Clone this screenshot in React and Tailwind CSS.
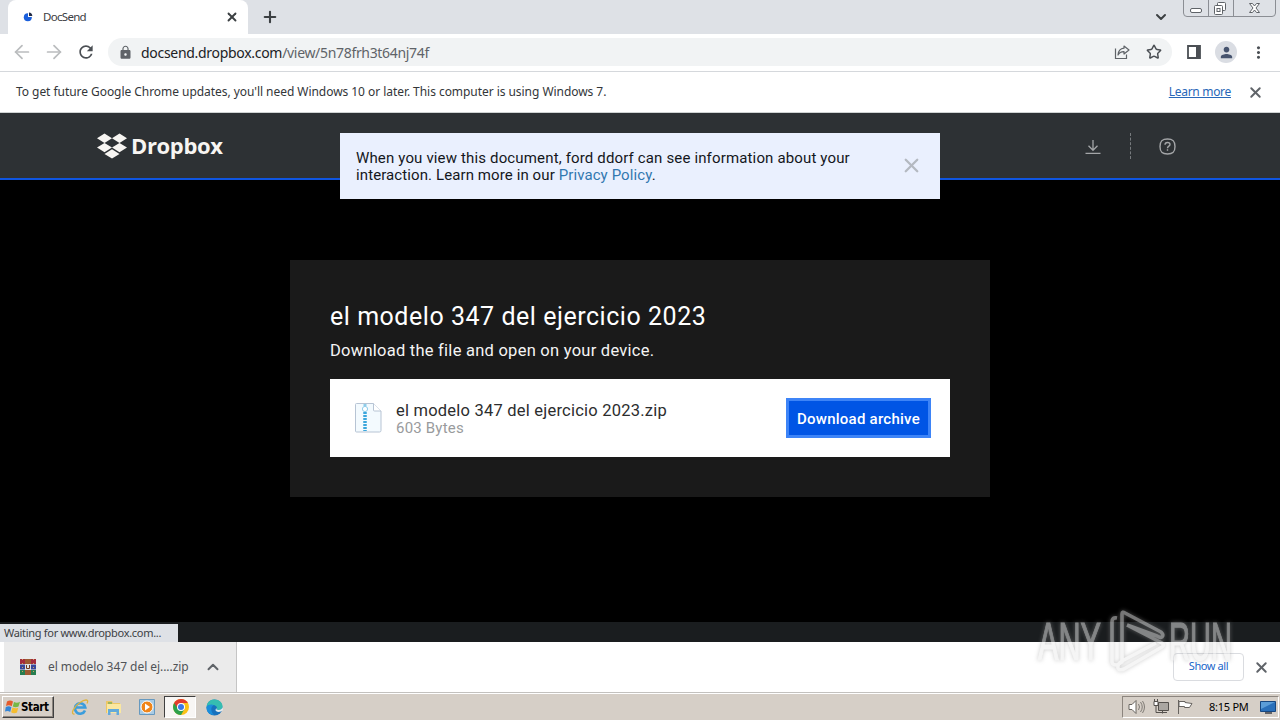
import { ArrowLeft, ArrowRight, ChevronDown, ChevronUp, Plus, Star, X } from 'lucide-react';
import { MdRefresh, MdLock, MdPerson, MdMoreVert } from 'react-icons/md';

function TabStrip() {
  return (
    <div className="relative flex h-[34px] bg-[#dee1e6] pl-2">
      <div className="flex h-[34px] w-60 items-center rounded-t-lg bg-white pl-[15px] pr-[9px] font-['Noto_Sans',sans-serif] text-[#3c4043]">
        <svg className="mr-[10px] h-[10px] w-[10px]" viewBox="0 0 10 10">
          <circle cx="4.8" cy="5.2" r="4" fill="#1a5fdc" />
          <path d="M5 5V1a4 4 0 0 1 4 4Z" fill="#fff" />
          <path d="M6 4V.6A3.7 3.7 0 0 1 9.3 4Z" fill="#222b45" />
        </svg>
        <span className="grow text-[11.5px] tracking-[-0.7px]">DocSend</span>
        <X className="h-[14px] w-[14px]" strokeWidth={3.2} />
      </div>
      <Plus className="ml-[13px] mt-[8px] h-[18px] w-[18px] text-[#3c4043]" strokeWidth={2.8} />
      <ChevronDown className="ml-auto mr-[111px] mt-[9px] h-4 w-4 text-[#3c4043]" strokeWidth={3} />
      {/* Window controls */}
      <svg className="absolute right-[4px] top-0 h-[17px] w-[93px]" viewBox="0 0 93 17" fill="none">
        <path d="M.5 0v13q0 3.500 3.500 3.500h85q3.500 0 3.500-3.500V0M25.500 0v16.500M50.500 0v16.500" stroke="#8b8e94" />
        <rect x="7.500" y="8.500" width="11" height="4" rx="1.500" stroke="#5f6368" fill="#fff" />
        <rect x="34.500" y="2.500" width="8" height="8" rx="1" stroke="#5f6368" fill="#fff" />
        <rect x="31.500" y="5.500" width="8" height="9" rx="1" stroke="#5f6368" fill="#fff" />
        <rect x="34" y="8.500" width="3" height="3" stroke="#5f6368" />
        <path d="M66.500 3.500h3l2 2.500 2-2.500h3l-3.500 4.500 3.500 4.500h-3l-2-2.500-2 2.500h-3l3.500-4.500Z" stroke="#5f6368" fill="#fff" />
      </svg>
    </div>
  );
}

function Toolbar() {
  return (
    <div className="flex h-[38px] items-center border-b border-[#d5d8dc] bg-white pb-px pl-[11px]">
      <ArrowLeft className="h-[22px] w-[22px] shrink-0 text-[#babcbe]" strokeWidth={1.9} />
      <ArrowRight className="ml-[10px] h-[22px] w-[22px] shrink-0 text-[#babcbe]" strokeWidth={1.9} />
      <MdRefresh className="ml-[11px] h-5 w-5 shrink-0 text-[#4b4f54]" />
      <div className="ml-[12px] flex h-7 w-[1064px] shrink-0 items-center rounded-full bg-[#f1f3f4] pl-[10px] pr-[10px]">
        <MdLock className="h-[15px] w-[15px] text-[#5f6368]" />
        <div className="ml-[8px] grow pt-px font-['Noto_Sans',sans-serif] text-[14px] leading-7 text-[#5f6368]">
          <span className="tracking-[-0.3px] text-[#202124]">docsend.dropbox.com</span>
          <span className="tracking-[-0.32px]">/view/5n78frh3t64nj74f</span>
        </div>
        <svg className="h-4 w-4" viewBox="0 0 16 16" fill="none" stroke="#5f6368" strokeWidth="1.200">
          <path d="M1.500 4.500v10h11v-4" />
          <path d="M10 2l5 4-5 4V7.600C7 7.500 5.300 8.600 4 11c.3-4 2.500-6.400 6-6.800Z" strokeLinejoin="round" />
        </svg>
        <Star className="ml-4 h-4 w-4 text-[#4b4f54]" strokeWidth={2.2} />
      </div>
      <svg className="ml-[15px] h-[14px] w-[14px] shrink-0" viewBox="0 0 14 14">
        <path d="M1 1h12v12H1Z" fill="none" stroke="#4b4f54" strokeWidth="1.800" />
        <path d="M9 1h4v12H9Z" fill="#4b4f54" />
      </svg>
      <div className="ml-[14px] flex h-[22px] w-[22px] shrink-0 items-center justify-center rounded-full bg-[#dadde3]">
        <MdPerson className="h-[17px] w-[17px] text-[#46536e]" />
      </div>
      <MdMoreVert className="ml-[12px] h-[19px] w-[19px] shrink-0 text-[#4b4f54]" />
    </div>
  );
}

function InfoBar() {
  return (
    <div className="flex h-[41px] items-center border-b border-[#cfd3d3] bg-white pl-4 pr-[16px] font-['Noto_Sans',sans-serif] text-[12px] text-[#333639]">
      <span className="grow tracking-[-0.05px]">
        To get future Google Chrome updates, you'll need Windows 10 or later. This computer is using Windows 7.
      </span>
      <a className="text-[12px] tracking-[-0.3px] text-[#2867b8] underline">Learn more</a>
      <X className="ml-[16px] h-[17px] w-[17px] text-[#5f6368]" strokeWidth={2.7} />
    </div>
  );
}

function DropboxHeader() {
  return (
    <div className="relative flex h-[67px] items-center border-b-2 border-[#0f55e0] bg-[#2d3134] pl-[97px] pr-[104px]">
      <svg className="mt-px h-[26px] w-[30px]" viewBox="0 0 30 26" fill="#f7f5f2">
        <path d="M7.500.5 0 5.200l7.500 4.700L15 5.200ZM22.500.5 15 5.200l7.500 4.700L30 5.200ZM0 14.600l7.500 4.700 7.500-4.700-7.500-4.700ZM22.500 9.900 15 14.600l7.500 4.700 7.500-4.700ZM7.500 20.900 15 25.600l7.500-4.700-7.500-4.700Z" />
      </svg>
      <span className="mb-px ml-[4px] font-['Open_Sans',sans-serif] text-[22px] font-bold leading-7 tracking-[-0.35px] text-[#f7f5f2]">Dropbox</span>
      <svg className="ml-auto mt-[2px] h-4 w-4" viewBox="0 0 16 16" fill="none" stroke="#a4a6a8" strokeWidth="1.300">
        <path d="M8 1v10M3.500 6.800 8 11.300l4.500-4.500M.5 14.300h15" />
      </svg>
      <div className="ml-[29px] h-[26px] border-l border-dashed border-[#777b7e]" />
      <svg className="ml-[28px] mt-[2px] h-[17px] w-[17px]" viewBox="0 0 17 17" fill="none" stroke="#a4a6a8" strokeWidth="1.400">
        <path d="M8.500 1C14 1 16 3 16 8.500S14 16 8.500 16 1 14 1 8.500 3 1 8.500 1Z" />
        <path d="M6 6.700C6 5.200 7 4.500 8.500 4.500S11 5.300 11 6.500c0 1.700-2.500 1.700-2.500 3.700M8.500 11.300v1.500" />
      </svg>

      {/* Privacy notice lies over the header and the page */}
      <div className="absolute left-[340px] top-5 z-10 flex h-[66px] w-[600px] items-center justify-between bg-[#eaf0fe] pl-4 pr-[17px]">
        <p className="mt-[2px] whitespace-nowrap font-['Roboto',sans-serif] text-[15px] leading-[17px] tracking-[0.15px] text-[#14171c]">
          When you view this document, ford ddorf can see information about your
          <br />
          <span className="tracking-[0.1px]">
            interaction. Learn more in our <a className="text-[#3278b0]">Privacy Policy</a>.
          </span>
        </p>
        <X className="mb-[2px] h-[23px] w-[23px] text-[#b4b9c1]" strokeWidth={2.4} />
      </div>
    </div>
  );
}

function ZipIcon() {
  return (
    <svg className="h-[30px] w-[27px]" viewBox="0 0 27 30" fill="none">
      <path d="M1.500.5h17l7.500 7.500v19.500q0 1.500-1.500 1.500h-23q-1 0-1-1V1.500q0-1 1-1Z" fill="#f3fafe" stroke="#b7c4d4" />
      <path d="M18.500.5V7q0 1 1 1H26" fill="#fff" stroke="#b7c4d4" />
      <path d="M10 9v19" stroke="#3aa6dc" strokeWidth="3.500" strokeDasharray="2 1" />
      <path d="M10 1v2" stroke="#8ecdea" strokeWidth="3" />
      <circle cx="10" cy="6" r="2.600" fill="#fff" stroke="#8ecdea" />
    </svg>
  );
}

function FilePage() {
  return (
    <div className="flex h-[442px] flex-col items-center bg-black pt-20 font-['Roboto',sans-serif]">
      <div className="h-[237px] w-[700px] bg-[#1a1a1a] px-10 pt-[41px]">
        <h1 className="whitespace-nowrap text-[25px] leading-8 tracking-[0.53px] text-white">el modelo 347 del ejercicio 2023</h1>
        <p className="mt-[6px] whitespace-nowrap text-[16.5px] leading-6 tracking-[0.25px] text-[#f4f4f4]">Download the file and open on your device.</p>
        <div className="mt-4 flex h-[78px] items-center bg-white pl-[25px] pr-[19px]">
          <ZipIcon />
          <div className="ml-[14px] grow whitespace-nowrap pt-[3px]">
            <p className="text-[16.5px] leading-[18px] tracking-[0.22px] text-[#2c2d2e]">el modelo 347 del ejercicio 2023.zip</p>
            <p className="text-[15px] leading-[17px] tracking-[0.2px] text-[#999b9d]">603 Bytes</p>
          </div>
          <button className="h-10 w-[145px] whitespace-nowrap border-3 border-[#3d84f7] bg-[#0055e5] pt-[2px] text-[15px] font-medium tracking-[0.25px] text-white">
            Download archive
          </button>
        </div>
      </div>
    </div>
  );
}

function DownloadShelf() {
  return (
    <div className="relative flex h-[50px] items-center bg-white pl-1 pr-[10px] font-['Noto_Sans',sans-serif]">
      <div className="absolute -top-[18px] left-0 h-[18px] w-[178px] whitespace-nowrap bg-[#dee1e6] pl-1 text-[11px] leading-[18px] tracking-[-0.3px] text-[#3c4043]">
        Waiting for www.dropbox.com...
      </div>
      <div className="flex h-full w-[233px] items-center border-r border-[#c5c5c5] bg-[#ebebeb] pl-4 pr-[14px]">
        <svg className="h-4 w-4" viewBox="0 0 16 16">
          <path d="M0 0h16v5H0Z" fill="#a32b3d" />
          <path d="M0 5.500h16v5H0Z" fill="#39479b" />
          <path d="M0 11h16v5H0Z" fill="#277d50" />
          <path d="M5 0h6v16H5Z" fill="#9d5a32" />
          <path d="M5 5h6v6H5Z" fill="#dce1e4" />
          <path d="M6.500 6v3.500h3V6" fill="none" stroke="#713821" />
          <path d="M2.500 0v16M13.500 0v16" stroke="#d0a058" strokeDasharray="1 3" />
        </svg>
        <span className="ml-3 grow text-[12px] tracking-[-0.05px] text-[#505357]">el modelo 347 del ej....zip</span>
        <ChevronUp className="h-[18px] w-[18px] text-[#5f6368]" strokeWidth={2.6} />
      </div>
      <div className="ml-auto flex h-7 w-[71px] items-center justify-center rounded border border-[#dadce0] pb-[2px] text-[11px] tracking-[-0.4px] text-[#1a66c9]">
        Show all
      </div>
      <X className="ml-[9px] h-[17px] w-[17px] text-[#5f6368]" strokeWidth={2.7} />
    </div>
  );
}

function StartMenuButton() {
  return (
    <div className="flex h-[22px] w-[52px] items-center border border-b-[#404040] border-l-white border-r-[#404040] border-t-white bg-[#d6cfc7] pl-[2px] shadow-[inset_-1px_-1px_0_#8c857e]">
      <svg className="h-4 w-[15px] shrink-0" viewBox="0 0 15 16">
        <path d="M2 2.500q3-2 6 0L6.700 7.200Q4 5.500 1 7Z" fill="#e55b2b" />
        <path d="M9 3q3 1.500 6-.3L13.500 7.500q-3 1.500-5.700 0Z" fill="#76b845" />
        <path d="M.8 8Q4 6.500 6.400 8.200L5.200 13Q3 11.300 0 12.500Z" fill="#3385d6" />
        <path d="M7.500 8.500q3 1.500 5.700.2L12 13.500q-3 1.500-5.900-.2Z" fill="#f5bd2f" />
      </svg>
      <span className="ml-px pt-[2px] font-['DejaVu_Sans_Condensed','DejaVu_Sans',sans-serif] text-[11.5px] font-bold tracking-[-0.35px] text-black">Start</span>
    </div>
  );
}

function Taskbar() {
  return (
    <div className="flex h-7 items-center border-t border-[#c3c1be] bg-[#d6cfc7] pl-[2px] pt-px shadow-[inset_0_1px_0_#fff]">
      <StartMenuButton />
      {/* Internet Explorer */}
      <svg className="ml-[17px] h-[18px] w-[18px]" viewBox="0 0 18 18" fill="none">
        <path d="M14 12.500A5.200 5.200 0 1 1 14.300 9.500H5" stroke="#3b9ddc" strokeWidth="2.600" />
        <path d="M3.500 16C-1 17 2.500 8.500 9 4.500 14 1 18.500 1 16 5.500" stroke="#dfb43e" strokeWidth="1.300" />
      </svg>
      {/* Explorer */}
      <svg className="ml-4 h-[17px] w-[17px]" viewBox="0 0 17 17">
        <path d="M1 2h6l1 2h7v10H1Z" fill="#edc765" />
        <path d="M2 5h14v9H2Z" fill="#fae7a0" />
        <path d="M3 16v-6h11v6h-2.500v-3h-6v3Z" fill="#63aada" />
        <path d="M3 4h4" stroke="#4ca157" />
      </svg>
      {/* Media player */}
      <svg className="ml-[17px] h-4 w-4" viewBox="0 0 16 16">
        <path d="M.5.500h15v15H.5Z" fill="#a8cbe4" stroke="#6799bf" />
        <circle cx="8" cy="8" r="6" fill="#f08519" stroke="#fff" />
        <path d="m6 4.500 5 3.500-5 3.500Z" fill="#fff" />
      </svg>
      <div className="ml-[9px] flex h-[22px] w-8 items-center justify-center border border-b-white border-l-[#404040] border-r-white border-t-[#404040] bg-[#f8f6f4] pl-px">
        <svg className="h-4 w-4" viewBox="0 0 16 16">
          <circle cx="8" cy="8" r="8" fill="#fbc116" />
          <path d="M1.100 4A8 8 0 0 0 8 16l3.500-6L8 8V4Z" fill="#2da14c" />
          <path d="M1.100 4a8 8 0 0 1 13.800 0H8L4.500 9Z" fill="#e33b2e" />
          <circle cx="8" cy="8" r="4" fill="#fff" />
          <circle cx="8" cy="8" r="3" fill="#3b78e7" />
        </svg>
      </div>
      {/* Edge */}
      <svg className="ml-[10px] h-[17px] w-[17px]" viewBox="0 0 17 17">
        <circle cx="8.500" cy="8.500" r="8" fill="#1771bd" />
        <path d="M.6 8C1 3 4 .5 8.500.5S17 4 16.500 8c-.3 2.500-3.500 3.500-6 2.500 1.500-2-.5-4.500-3.500-4.500S1.500 6 .6 8Z" fill="#35bdb1" />
        <path d="M10.500 10.500c2.500 1 5.700 0 6-2.500l.5 3-2 1.500c-3 1-5.500 0-5.500-1.500 0-.8.500-1.500 1-2Z" fill="#e4edf0" />
        <path d="M.6 8c2-3 6-3 7-1.500C5 7 4 12 8 16 3 16 0 12 .6 8Z" fill="#1b8edb" />
      </svg>

      <div className="ml-auto mr-px flex h-[22px] w-[157px] items-center border border-b-white border-l-[#8c857e] border-r-white border-t-[#8c857e] pl-[5px]">
        <svg className="h-4 w-[17px] shrink-0" viewBox="0 0 17 16" fill="#fff" stroke="#68645f">
          <path d="M1 5.500h3l4-4v13l-4-4H1Z" />
          <path d="M10.500 5q2 3 0 6M12.500 3q3.500 5 0 10M14.500 2q4 6 0 12" fill="none" strokeWidth=".8" />
        </svg>
        <svg className="ml-[8px] h-4 w-4 shrink-0" viewBox="0 0 16 16" fill="none" stroke="#55514d">
          <path d="M5.500 3.500h10v8h-10Z" fill="#aaa6a1" />
          <path d="M3 6.500v7h11M9.500 11.500v3" />
          <path d="M1 2.500h4v4H1ZM1.500 0v2.500M4.500 0v2.500" fill="#fff" />
        </svg>
        <svg className="ml-[8px] h-4 w-4 shrink-0" viewBox="0 0 16 16" fill="#fff" stroke="#67635f">
          <path d="M1.500 15V1" />
          <path d="M2 2.500h6v1l7 1-2.500 4H7.500v-1H2Z" />
        </svg>
        <span className="ml-4 w-[43px] whitespace-nowrap font-['Noto_Sans',sans-serif] text-[11px] tracking-[-0.25px] text-black">8:15 PM</span>
        <svg className="ml-[8px] h-[13px] w-4 shrink-0" viewBox="0 0 16 13">
          <path d="M.5.500h15v10H.5Z" fill="#2a70ba" stroke="#174780" />
          <path d="M1 1h14L1 8Z" fill="#5b9dd8" />
          <path d="M5 12h7" stroke="#3c3f47" strokeWidth="1.500" />
        </svg>
      </div>
    </div>
  );
}

function Watermark() {
  return (
    <div className="pointer-events-none absolute left-[1036px] top-[608px] z-20 h-[66px] w-[204px] opacity-50">
      <svg className="h-full w-full overflow-visible drop-shadow-[0_0_2px_#999]" viewBox="0 0 204 66" fill="none">
        <g fill="#ececec" stroke="#ececec" strokeWidth="1.200" fontFamily="Liberation Sans" fontSize="54">
          <text x="2" y="52" textLength="63" lengthAdjust="spacingAndGlyphs">ANY</text>
          <text x="133" y="52" textLength="63" lengthAdjust="spacingAndGlyphs">RUN</text>
        </g>
        <path
          d="M81 10q-5-1-5 4v40q0 3 5 3l5-3V6q0-3 3-1l36 19q3 3 1 5-2 1-5-1L91 17M91 17l35 18q3 2 0 4L88 61q-5 2-6-1-1-4 4-7l34-18"
          stroke="#ececec"
          strokeWidth="3.600"
          strokeLinejoin="round"
        />
      </svg>
    </div>
  );
}

export default function App() {
  return (
    <div className="relative flex h-[720px] w-[1280px] flex-col overflow-hidden bg-black">
      <TabStrip />
      <Toolbar />
      <InfoBar />
      <DropboxHeader />
      <FilePage />
      <div className="h-5 bg-[#1a1d1f]" />
      <DownloadShelf />
      <Taskbar />
      <Watermark />
    </div>
  );
}
